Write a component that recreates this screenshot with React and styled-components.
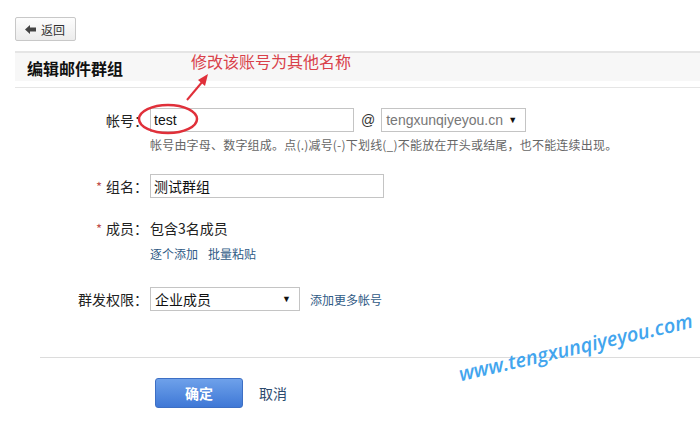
import React from 'react';
import styled, { createGlobalStyle } from 'styled-components';

const GlobalStyle = createGlobalStyle`
  html, body {
    margin: 0;
    padding: 0;
    background: #fff;
  }
  body {
    font-family: "Liberation Sans", "Noto Sans CJK SC", sans-serif;
    font-size: 14px;
    color: #222;
  }
`;

const Page = styled.div`
  position: relative;
  width: 700px;
  height: 423px;
  overflow: hidden;
  background: #fff;
`;

const Toolbar = styled.div`
  display: flex;
  padding: 17px 0 0 15px;
`;

const BackButton = styled.button`
  display: flex;
  align-items: center;
  gap: 5px;
  width: 61px;
  height: 24px;
  padding: 0 0 0 9px;
  border: 1px solid #c8c8c8;
  border-radius: 2px;
  background: linear-gradient(#fdfdfd, #ececec);
  font-family: "Noto Sans CJK SC", sans-serif;
  font-size: 12px;
  color: #333;
  cursor: pointer;
`;

const Header = styled.div`
  margin: 10px 0 0 15px;
  height: 34px;
  border-top: 2px solid #e5e5e5;
  border-bottom: 1px solid #e5e5e5;
  background: linear-gradient(to bottom, #f7f7f7 28px, #fff 28px);
  display: flex;
  align-items: flex-start;
`;

const Title = styled.h2`
  margin: 0;
  padding: 5px 0 0 12px;
  font-family: "Noto Sans CJK SC", sans-serif;
  font-size: 16px;
  line-height: 20px;
  font-weight: bold;
  color: #111;
`;

const Form = styled.div`
  padding-top: 20px;
  display: flex;
  flex-direction: column;
`;

const Row = styled.div`
  display: grid;
  grid-template-columns: 148px 1fr;
  column-gap: 2px;
  margin-top: ${p => p.$gap || 0}px;
`;

const Label = styled.div`
  display: flex;
  justify-content: flex-end;
  align-items: center;
  height: ${p => p.$h || 24}px;
  font-family: "Noto Sans CJK SC", sans-serif;
  font-size: 14px;
  color: #222;
  white-space: nowrap;
`;

const Star = styled.span`
  color: #c0504d;
  margin-right: 4px;
  font-size: 13px;
`;

const Field = styled.div`
  display: flex;
  flex-direction: column;
`;

const Line = styled.div`
  display: flex;
  align-items: center;
  gap: ${p => p.$gap || 0}px;
  height: ${p => p.$h || 24}px;
`;

const Input = styled.div`
  box-sizing: border-box;
  width: ${p => p.$w}px;
  height: 24px;
  border: 1px solid #c4c4c4;
  padding: 0 3px;
  display: flex;
  align-items: center;
  font-family: "Liberation Sans", "Noto Sans CJK SC", sans-serif;
  font-size: 14px;
  color: #111;
`;

const At = styled.span`
  margin: 0 6px 0 7px;
  font-family: "Liberation Sans", sans-serif;
  font-size: 14px;
  color: #333;
`;

const Select = styled.div`
  box-sizing: border-box;
  width: ${p => p.$w}px;
  height: 24px;
  border: 1px solid #c4c4c4;
  padding: 0 8px 0 4px;
  display: flex;
  align-items: center;
  justify-content: space-between;
  font-family: "Liberation Sans", "Noto Sans CJK SC", sans-serif;
  font-size: 14px;
  color: ${p => p.$muted ? '#777' : '#111'};
  white-space: nowrap;
`;

const Caret = styled.span`
  font-size: 9px;
  color: #111;
`;

const Hint = styled.div`
  margin-top: 5px;
  font-family: "Noto Sans CJK SC", sans-serif;
  font-size: 12px;
  line-height: 16px;
  color: #666;
  white-space: nowrap;
  letter-spacing: 0.2px;
`;

const Text = styled.span`
  font-family: "Noto Sans CJK SC", sans-serif;
  font-size: 14px;
  color: #222;
`;

const Links = styled.div`
  display: flex;
  gap: 10px;
  margin-top: 7px;
  height: 16px;
  align-items: center;
`;

const Link = styled.a`
  font-family: "Noto Sans CJK SC", sans-serif;
  font-size: 12px;
  color: #2f5a85;
  text-decoration: none;
  cursor: pointer;
`;

const Divider = styled.div`
  margin: 46px 0 0 40px;
  border-top: 1px solid #dcdcdc;
`;

const Actions = styled.div`
  display: flex;
  align-items: center;
  gap: 16px;
  padding: 20px 0 0 155px;
`;

const Primary = styled.button`
  width: 88px;
  height: 30px;
  border: 1px solid #3d6fc4;
  border-radius: 3px;
  background: linear-gradient(#6ea1ea, #3f78d6);
  color: #fff;
  font-family: "Noto Sans CJK SC", sans-serif;
  font-size: 14px;
  font-weight: bold;
  cursor: pointer;
`;

const Cancel = styled.a`
  font-family: "Noto Sans CJK SC", sans-serif;
  font-size: 14px;
  color: #2d4b6e;
  cursor: pointer;
`;

const Note = styled.div`
  position: absolute;
  left: 191px;
  top: 51px;
  font-family: "Noto Sans CJK SC", sans-serif;
  font-size: 16px;
  line-height: 20px;
  color: #d9414a;
  white-space: nowrap;
`;

const Marks = styled.svg`
  position: absolute;
  left: 0;
  top: 0;
  pointer-events: none;
`;

const Watermark = styled.div`
  position: absolute;
  left: 462px;
  top: 360px;
  font-family: "Open Sans", sans-serif;
  font-style: italic;
  font-weight: 600;
  font-size: 20px;
  color: #42a5ee;
  white-space: nowrap;
  transform: rotate(-13deg);
  transform-origin: left bottom;
`;

const BackArrow = () => (
  <svg width="11" height="9" viewBox="0 0 11 9">
    <path d="M0 4.5 L5 0 L5 2.5 L11 2.5 L11 6.5 L5 6.5 L5 9 Z" fill="#444" />
  </svg>
);

export default function App() {
  return (
    <Page>
      <GlobalStyle />
      <Toolbar>
        <BackButton><BackArrow />返回</BackButton>
      </Toolbar>
      <Header>
        <Title>编辑邮件群组</Title>
      </Header>
      <Form>
        <Row>
          <Label>帐号：</Label>
          <Field>
            <Line>
              <Input $w={204}>test</Input>
              <At>@</At>
              <Select $w={145} $muted>tengxunqiyeyou.cn<Caret>▼</Caret></Select>
            </Line>
            <Hint>帐号由字母、数字组成。点(.)减号(-)下划线(_)不能放在开头或结尾，也不能连续出现。</Hint>
          </Field>
        </Row>
        <Row $gap={21}>
          <Label><Star>*</Star>组名：</Label>
          <Field>
            <Input $w={234}>测试群组</Input>
          </Field>
        </Row>
        <Row $gap={20}>
          <Label $h={20}><Star>*</Star>成员：</Label>
          <Field>
            <Line $h={20}><Text>包含3名成员</Text></Line>
            <Links>
              <Link>逐个添加</Link>
              <Link>批量粘贴</Link>
            </Links>
          </Field>
        </Row>
        <Row $gap={26}>
          <Label>群发权限：</Label>
          <Field>
            <Line $gap={10}>
              <Select $w={150}>企业成员<Caret>▼</Caret></Select>
              <Link>添加更多帐号</Link>
            </Line>
          </Field>
        </Row>
      </Form>
      <Divider />
      <Actions>
        <Primary>确定</Primary>
        <Cancel>取消</Cancel>
      </Actions>

      <Note>修改该账号为其他名称</Note>
      <Marks width="700" height="423" viewBox="0 0 700 423">
        <ellipse cx="168" cy="119" rx="29" ry="14" fill="none" stroke="#e0303a" strokeWidth="2.5" />
        <line x1="187" y1="100" x2="203" y2="81" stroke="#e0303a" strokeWidth="2" />
        <path d="M208 74 L198 80 L205 86 Z" fill="#e0303a" />
      </Marks>
      <Watermark>www.tengxunqiyeyou.com</Watermark>
    </Page>
  );
}
